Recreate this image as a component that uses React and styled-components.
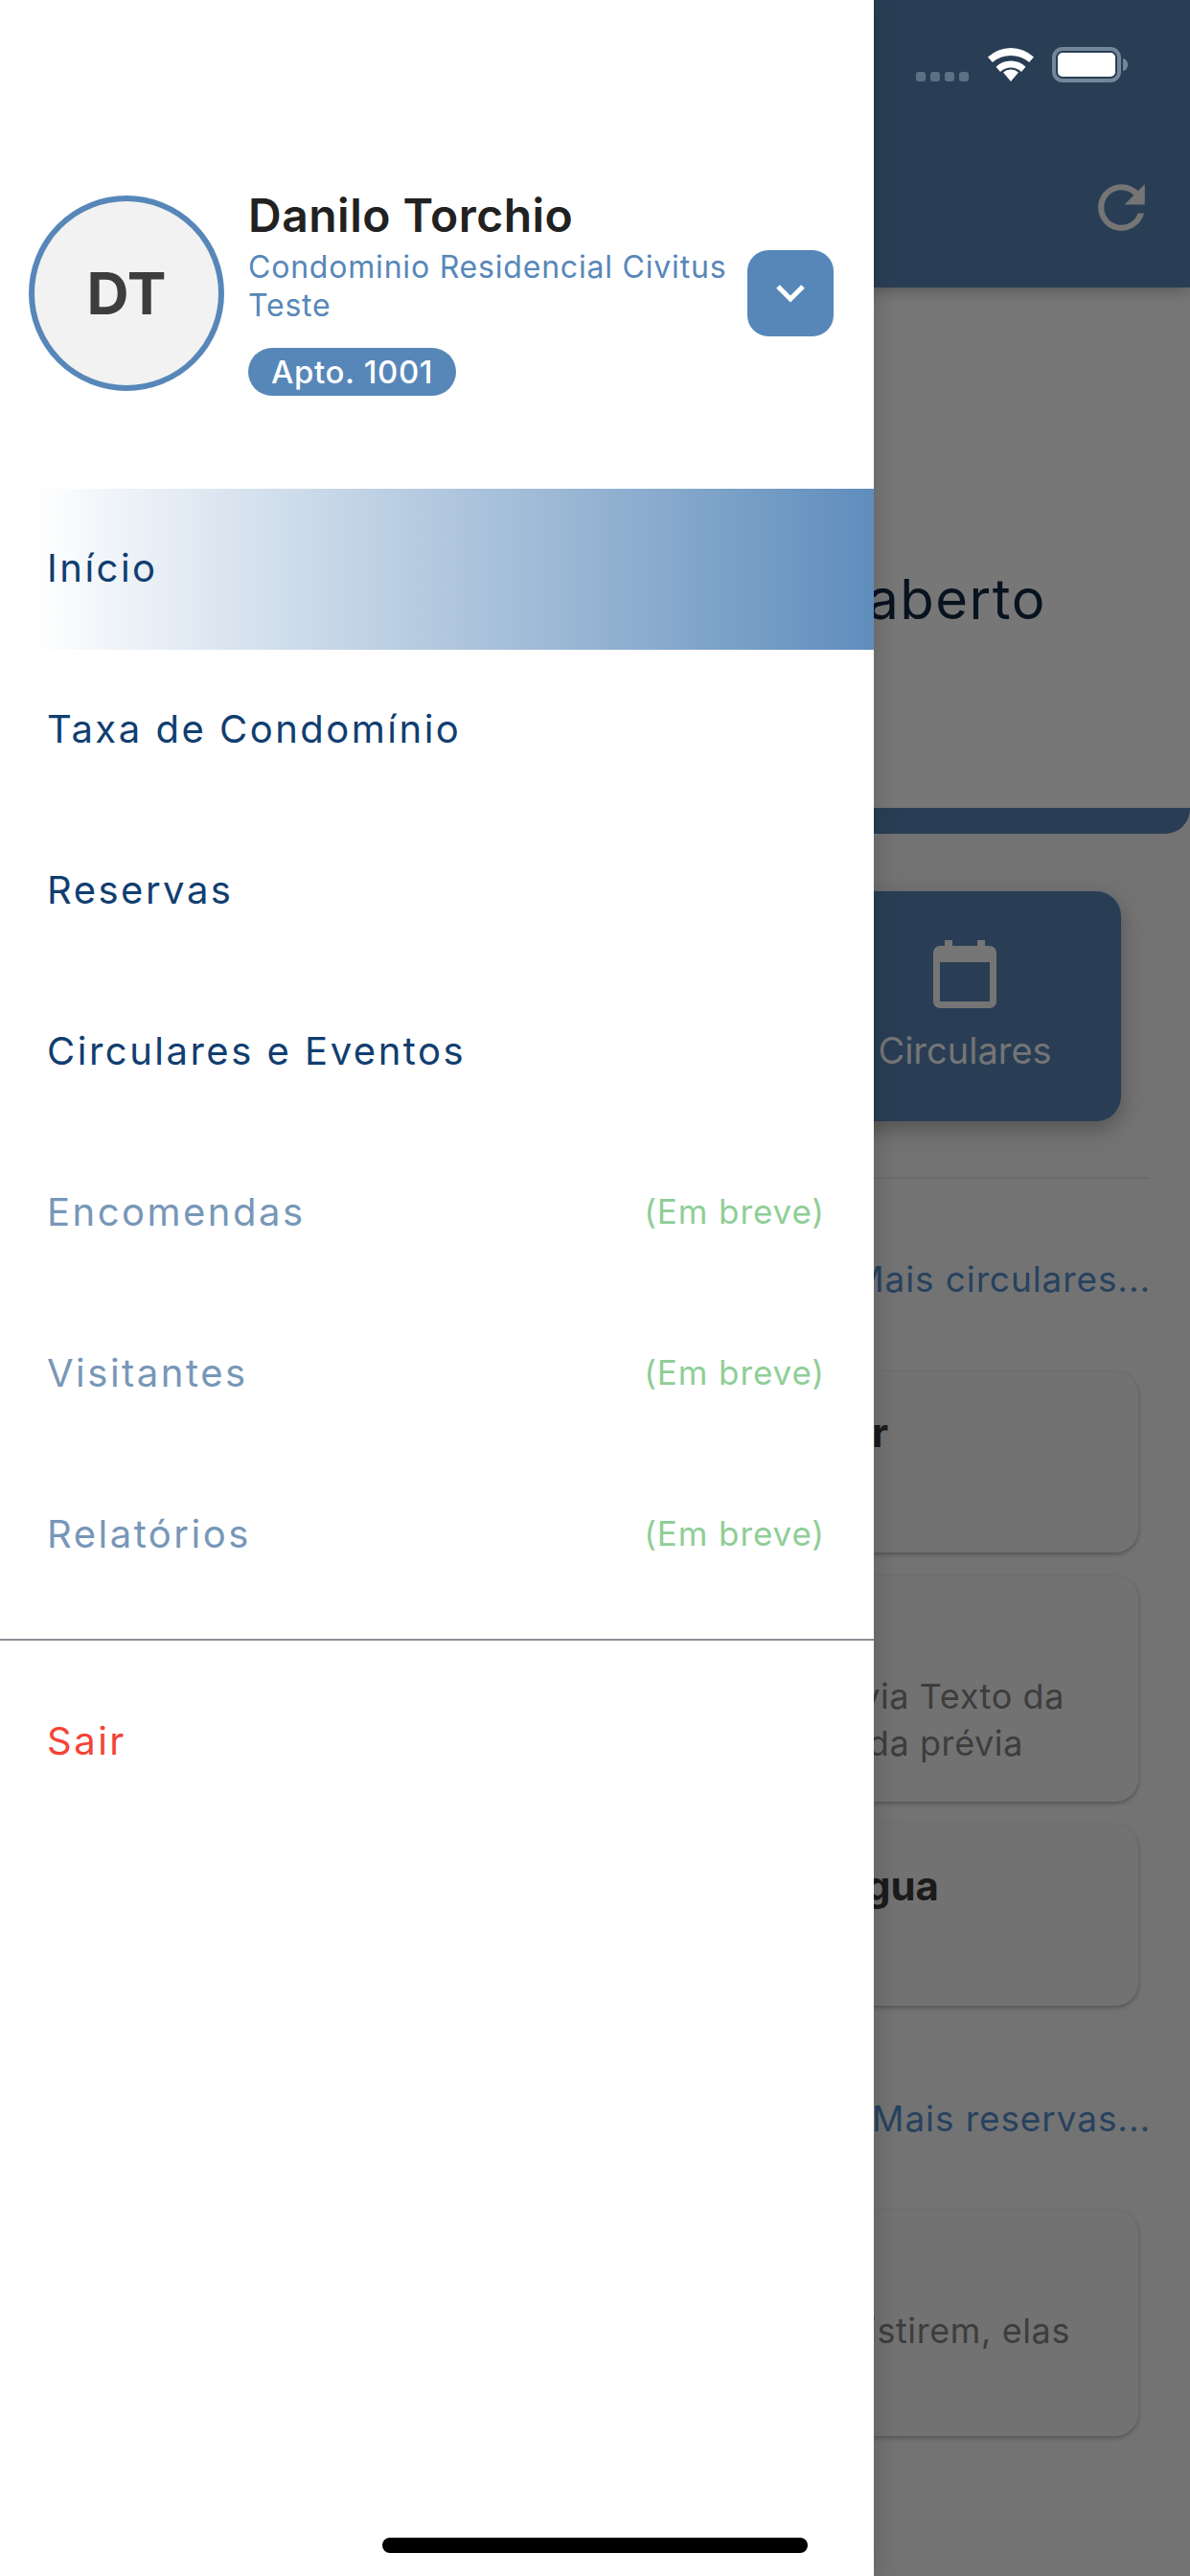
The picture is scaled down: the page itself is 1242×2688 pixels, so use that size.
import React from "react";
import styled, { createGlobalStyle } from "styled-components";

const Global = createGlobalStyle`
  html, body { margin: 0; padding: 0; background: #747474; }
  * { box-sizing: border-box; }
  body { font-family: Inter, "Liberation Sans", sans-serif; }
`;

const Phone = styled.div`
  position: relative;
  width: 1242px;
  height: 2688px;
  overflow: hidden;
  background: #737373;
`;

/* ---------- dimmed screen beneath the drawer ---------- */
const Screen = styled.div`
  display: flex;
  flex-direction: column;
  height: 100%;
`;
const Header = styled.header`
  height: 300px;
  background: #293e55;
  padding: 49px 47px 0 0;
  display: flex;
  flex-direction: column;
  box-shadow: 0 4px 14px rgba(0, 0, 0, 0.25);
  position: relative;
`;
const StatusRow = styled.div`
  display: flex;
  justify-content: flex-end;
  margin-right: 17px;
  align-items: flex-start;
  height: 37px;
`;
const Dots = styled.div`
  display: flex;
  gap: 5px;
  margin: 26px 20px 0 0;
`;
const Dot = styled.span`
  width: 10px;
  height: 10px;
  border-radius: 3px;
  background: #5d7186;
`;
const Wifi = styled.svg`
  width: 48px;
  height: 36px;
  margin-right: 19px;
`;
const Battery = styled.svg`
  width: 80px;
  height: 37px;
`;
const Actions = styled.div`
  display: flex;
  justify-content: flex-end;
  margin: 94px -12px 0 0;
`;
const Refresh = styled.svg`
  width: 73px;
  height: 73px;
  fill: #757575;
`;
const Hero = styled.section`
  height: 570px;
  background: #777777;
  border-bottom: 27px solid #293e55;
  border-radius: 0 0 26px 26px;
  display: flex;
  justify-content: flex-end;
  padding: 290px 150px 0 0;
`;
const HeroText = styled.h1`
  margin: 0;
  font-size: 58px;
  line-height: 70px;
  font-weight: 400;
  letter-spacing: 1.5px;
  color: #07131f;
  white-space: nowrap;
`;
const Tiles = styled.div`
  display: flex;
  justify-content: flex-end;
  padding-right: 72px;
  margin-top: 60px;
`;
const Tile = styled.div`
  width: 326px;
  height: 240px;
  border-radius: 26px;
  background: #293e55;
  box-shadow: 0 8px 22px rgba(0, 0, 0, 0.28);
  display: flex;
  flex-direction: column;
  align-items: center;
  padding-top: 51px;
`;
const Calendar = styled.svg`
  width: 66px;
  height: 71px;
  fill: #757575;
`;
const TileLabel = styled.span`
  margin-top: 22px;
  font-size: 38px;
  line-height: 44px;
  color: #757575;
  white-space: nowrap;
`;
const Rule = styled.div`
  height: 2px;
  background: #6c6c6c;
  margin: 58px 42px 0 0;
`;
const More = styled.div`
  text-align: right;
  margin: ${(p) => p.$top}px 41px 0 0;
  font-size: 37px;
  line-height: 46px;
  letter-spacing: 0.9px;
  color: #27425f;
  white-space: nowrap;
`;
const Cards = styled.div`
  display: flex;
  flex-direction: column;
  gap: 24px;
  margin: ${(p) => p.$top}px 54px 0 0;
`;
const Card = styled.article`
  height: ${(p) => p.$h}px;
  padding-top: ${(p) => p.$pad}px;
  border-radius: 24px;
  background: #727272;
  box-shadow: 0 2px 4px rgba(0, 0, 0, 0.28);
`;
const CardTitle = styled.div`
  text-align: right;
  padding-right: ${(p) => p.$right}px;
  font-size: 42px;
  line-height: 50px;
  font-weight: 700;
  color: #1b1b1b;
  white-space: nowrap;
`;
const CardLine = styled.div`
  text-align: right;
  padding-right: ${(p) => p.$right}px;
  font-size: 36px;
  line-height: 49px;
  letter-spacing: 0.6px;
  color: #3d3d3d;
  white-space: nowrap;
`;

/* ---------- drawer ---------- */
const Drawer = styled.aside`
  position: absolute;
  left: 0;
  top: 0;
  bottom: 0;
  width: 912px;
  background: #fff;
  box-shadow: 6px 0 22px rgba(0, 0, 0, 0.12);
`;
const Profile = styled.div`
  display: flex;
  align-items: center;
  padding: 199px 42px 0 30px;
`;
const Avatar = styled.div`
  flex: none;
  width: 204px;
  height: 204px;
  border-radius: 50%;
  border: 6px solid #5787b9;
  background: #f2f2f2;
  display: flex;
  align-items: center;
  justify-content: center;
  font-size: 61px;
  font-weight: 700;
  color: #3d3d3d;
`;
const Info = styled.div`
  flex: 1;
  margin: 0 10px 0 25px;
  display: flex;
  flex-direction: column;
  align-items: flex-start;
`;
const Name = styled.div`
  font-size: 48px;
  line-height: 52px;
  font-weight: 600;
  letter-spacing: 0.5px;
  color: #212121;
`;
const Condo = styled.div`
  margin-top: 8px;
  font-size: 32px;
  line-height: 40px;
  letter-spacing: 0.8px;
  color: #5787b9;
`;
const Pill = styled.div`
  margin-top: 24px;
  height: 50px;
  padding: 0 24px;
  border-radius: 25px;
  background: #5787b9;
  color: #fff;
  font-size: 33px;
  line-height: 50px;
  font-weight: 500;
  letter-spacing: 0.6px;
`;
const ToggleButton = styled.button`
  flex: none;
  width: 90px;
  height: 90px;
  padding: 0;
  border: 0;
  border-radius: 22px;
  background: #5787b9;
  display: flex;
  align-items: center;
  justify-content: center;
`;
const Menu = styled.nav`
  margin-top: 97px;
  display: flex;
  flex-direction: column;
`;
const Item = styled.div`
  height: 168px;
  padding: 0 51px 4px 49px;
  display: flex;
  align-items: center;
  justify-content: space-between;
  font-size: 40px;
  letter-spacing: 2.5px;
  color: ${(p) => p.$color || "#103e70"};
  background: ${(p) =>
    p.$active ? "linear-gradient(90deg, #ffffff 4%, #5f8dbc 100%)" : "transparent"};
`;
const Soon = styled.span`
  font-size: 35px;
  letter-spacing: 0.9px;
  color: #8fce97;
`;
const MenuRule = styled.div`
  height: 2px;
  margin: 24px 0 22px;
  background: #8a8f96;
`;
const HomeBar = styled.div`
  position: absolute;
  left: 399px;
  top: 2648px;
  width: 444px;
  height: 16px;
  border-radius: 8px;
  background: #000;
`;

const soonItems = ["Encomendas", "Visitantes", "Relatórios"];

export default function App() {
  return (
    <Phone>
      <Global />
      <Screen>
        <Header>
          <StatusRow>
            <Dots>
              <Dot />
              <Dot />
              <Dot />
              <Dot />
            </Dots>
            <Wifi viewBox="0 0 48 36">
              <path d="M24 36 16 26.500a12 12 0 0 1 16 0Z" fill="#fff" />
              <path d="M24 14.500a22 22 0 0 0-15.500 6.300l4.500 5.200a15.500 15.500 0 0 1 22 0l4.500-5.200A22 22 0 0 0 24 14.500Z" fill="#fff" />
              <path d="M24 1A37 37 0 0 0 0 10.500l4.800 5.500a29.500 29.500 0 0 1 38.400 0l4.800-5.500A37 37 0 0 0 24 1Z" fill="#fff" />
            </Wifi>
            <Battery viewBox="0 0 80 37">
              <rect x="2" y="2" width="68" height="33" rx="9" fill="none" stroke="#74869a" strokeWidth="4" />
              <rect x="6" y="6" width="60" height="25" rx="5" fill="#fff" />
              <path d="M74 12c3 .5 5 3 5 6.500s-2 6-5 6.500Z" fill="#74869a" />
            </Battery>
          </StatusRow>
          <Actions>
            <Refresh viewBox="0 0 24 24">
              <path d="M17.650 6.350C16.200 4.900 14.210 4 12 4c-4.420 0-7.990 3.580-7.990 8s3.570 8 7.990 8c3.730 0 6.840-2.550 7.730-6h-2.080c-.82 2.330-3.040 4-5.650 4-3.310 0-6-2.690-6-6s2.690-6 6-6c1.660 0 3.140.69 4.220 1.780L13 11h7V4l-2.350 2.350z" />
            </Refresh>
          </Actions>
        </Header>
        <Hero>
          <HeroText>Nada em aberto</HeroText>
        </Hero>
        <Tiles>
          <Tile>
            <Calendar viewBox="0 0 66 71">
              <path
                fillRule="evenodd"
                d="M12 0h8v6h26V0h8v6h5a7 7 0 0 1 7 7v51a7 7 0 0 1-7 7H7a7 7 0 0 1-7-7V13a7 7 0 0 1 7-7h5ZM7 23v41h52V23Z"
              />
            </Calendar>
            <TileLabel>Circulares</TileLabel>
          </Tile>
        </Tiles>
        <Rule />
        <More $top={82}>Mais circulares...</More>
        <Cards $top={73}>
          <Card $h={189} $pad={39}>
            <CardTitle $right={261}>Reunião do Conselho Popular</CardTitle>
          </Card>
          <Card $h={236} $pad={102}>
            <CardLine $right={77}>Texto da prévia Texto da</CardLine>
            <CardLine $right={120}>prévia Texto da prévia</CardLine>
          </Card>
          <Card $h={189} $pad={39}>
            <CardTitle $right={208}>Falta de água</CardTitle>
          </Card>
        </Cards>
        <More $top={95}>Mais reservas...</More>
        <Cards $top={72}>
          <Card $h={236} $pad={102}>
            <CardLine $right={71}>Quando as reservas existirem, elas</CardLine>
          </Card>
        </Cards>
      </Screen>

      <Drawer>
        <Profile>
          <Avatar>DT</Avatar>
          <Info>
            <Name>Danilo Torchio</Name>
            <Condo>Condominio Residencial Civitus Teste</Condo>
            <Pill>Apto. 1001</Pill>
          </Info>
          <ToggleButton aria-label="Trocar unidade">
            <svg width="32" height="20" viewBox="0 0 32 20" fill="none">
              <path d="M3 3l13 13L29 3" stroke="#fff" strokeWidth="5" />
            </svg>
          </ToggleButton>
        </Profile>
        <Menu>
          <Item $active>Início</Item>
          <Item>Taxa de Condomínio</Item>
          <Item>Reservas</Item>
          <Item>Circulares e Eventos</Item>
          {soonItems.map((label) => (
            <Item key={label} $color="#7797b8">
              {label}
              <Soon>(Em breve)</Soon>
            </Item>
          ))}
          <MenuRule />
          <Item $color="#f44336">Sair</Item>
        </Menu>
      </Drawer>
      <HomeBar />
    </Phone>
  );
}
